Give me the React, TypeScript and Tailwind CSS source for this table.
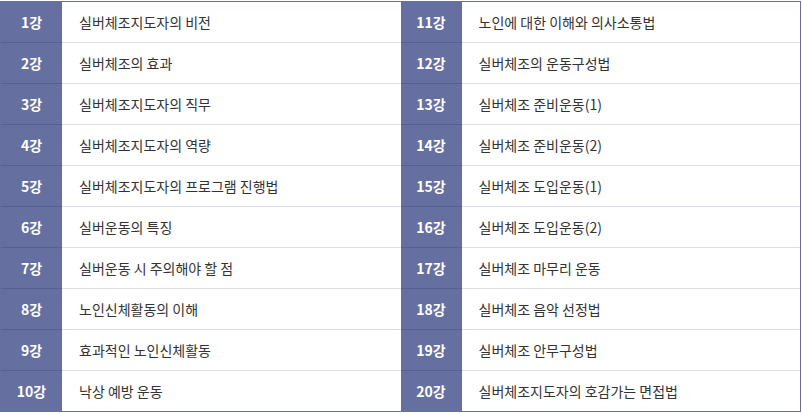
const rows: [string, string, string, string][] = [
  ['1강', '실버체조지도자의 비전', '11강', '노인에 대한 이해와 의사소통법'],
  ['2강', '실버체조의 효과', '12강', '실버체조의 운동구성법'],
  ['3강', '실버체조지도자의 직무', '13강', '실버체조 준비운동(1)'],
  ['4강', '실버체조지도자의 역량', '14강', '실버체조 준비운동(2)'],
  ['5강', '실버체조지도자의 프로그램 진행법', '15강', '실버체조 도입운동(1)'],
  ['6강', '실버운동의 특징', '16강', '실버체조 도입운동(2)'],
  ['7강', '실버운동 시 주의해야 할 점', '17강', '실버체조 마무리 운동'],
  ['8강', '노인신체활동의 이해', '18강', '실버체조 음악 선정법'],
  ['9강', '효과적인 노인신체활동', '19강', '실버체조 안무구성법'],
  ['10강', '낙상 예방 운동', '20강', '실버체조지도자의 호감가는 면접법'],
];

function Label({ text, last }: { text: string; last: boolean }) {
  return (
    <div
      className={`w-[61px] shrink-0 flex items-center justify-center bg-[#6570a0] text-white font-bold text-[14px] ${
        last ? '' : 'border-b border-[#56618f]'
      }`}
    >
      {text}
    </div>
  );
}

function Cell({ text, last }: { text: string; last: boolean }) {
  return (
    <div
      className={`flex-1 flex items-center pl-[17px] text-[14px] text-[#333333] ${
        last ? '' : 'border-b border-[#dedee6]'
      }`}
    >
      {text}
    </div>
  );
}

export default function App() {
  return (
    <div className="w-[802px] h-[414px] bg-white pt-px" style={{ fontFamily: '"Noto Sans CJK KR", "Noto Sans", sans-serif' }}>
      <div className="w-[801px] border border-[#6570a0] flex flex-col">
        {rows.map((r, i) => {
          const last = i === rows.length - 1;
          return (
            <div key={r[0]} className={`flex ${last ? 'h-[40px]' : 'h-[41px]'}`}>
              <Label text={r[0]} last={last} />
              <Cell text={r[1]} last={last} />
              <Label text={r[2]} last={last} />
              <Cell text={r[3]} last={last} />
            </div>
          );
        })}
      </div>
    </div>
  );
}
